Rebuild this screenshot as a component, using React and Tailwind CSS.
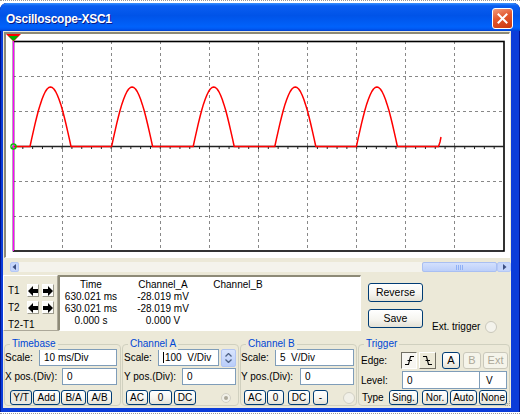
import React from "react";

const BASE = 146.5;

// red trace: half-wave rectified sine
function tracePath() {
  let d = `M13 ${BASE}`;
  for (let k = 0; k < 5; k++) {
    const s = 30 + 81.6 * k;
    d += ` L${s.toFixed(1)} ${BASE}`;
    for (let i = 1; i <= 24; i++) {
      const x = s + (41 * i) / 24;
      const y = BASE - 59.5 * Math.sin((Math.PI * i) / 24);
      d += ` L${x.toFixed(1)} ${y.toFixed(1)}`;
    }
  }
  d += ` L438.5 ${BASE} L440 142 L441 137`;
  return d;
}

const vLines = [62, 111, 160, 209, 258, 307, 356, 405, 454];
const hLines = [76, 111, 181, 216];
const ticks = Array.from({ length: 50 }, (_, i) => 13 + 9.82 * i);

function Plot() {
  return (
    <div className="ml-[1px] mr-[1px] mt-[1px] h-[226px] border-l-2 border-t-2 border-[#8d8a77] border-b border-r border-b-white border-r-white bg-white">
      <svg width="503" height="223" viewBox="6 34 503 223" className="block">
        {vLines.map((x) => (
          <line key={x} x1={x + 0.5} y1="41" x2={x + 0.5} y2="251" stroke="#888" strokeDasharray="3 3" />
        ))}
        {hLines.map((y) => (
          <line key={y} x1="13" y1={y + 0.5} x2="504" y2={y + 0.5} stroke="#888" strokeDasharray="3 3" />
        ))}
        <rect x="13.5" y="41.5" width="490.5" height="209.5" fill="none" stroke="#000" strokeWidth="1.6" />
        <line x1="13" y1={BASE} x2="504" y2={BASE} stroke="#222" strokeWidth="1.3" />
        {ticks.map((x) => (
          <line key={x} x1={x} y1={BASE} x2={x} y2={BASE + 2.5} stroke="#222" strokeWidth="1" />
        ))}
        <path d={tracePath()} fill="none" stroke="#ff0000" strokeWidth="1.5" strokeLinejoin="round" />
        <line x1="13.5" y1="36" x2="13.5" y2="251" stroke="#ff00ff" strokeWidth="1.2" />
        <polygon points="6,34 21,34 13.5,41.5" fill="#ff0000" />
        <polygon points="8.5,36 18.5,36 13.5,41" fill="#00b000" />
        <circle cx="13.5" cy={BASE} r="2.6" fill="none" stroke="#00c000" strokeWidth="1.3" />
      </svg>
    </div>
  );
}

function ScrollBar() {
  return (
    <div className="ml-[7px] mt-[4px] flex h-[10px]">
      <div className="flex w-[9px] items-center justify-center rounded-[2px] border border-[#b4c8f6] bg-[#c6d6fb]">
        <svg width="5" height="6" viewBox="0 0 5 6">
          <polygon points="4,0 4,6 0.5,3" fill="#3c4f82" />
        </svg>
      </div>
      <div className="flex-1 bg-[#f4f3ec]" />
      <div className="flex w-[75px] items-center justify-center gap-[1px] rounded-[2px] border border-[#a9bff2] bg-[linear-gradient(180deg,#d3e0fd,#bccffa)]">
        <span className="h-[5px] w-[1px] bg-[#8fb0f4]" />
        <span className="h-[5px] w-[1px] bg-[#8fb0f4]" />
        <span className="h-[5px] w-[1px] bg-[#8fb0f4]" />
        <span className="h-[5px] w-[1px] bg-[#8fb0f4]" />
      </div>
      <div className="flex w-[14px] items-center justify-center rounded-[2px] border border-[#b4c8f6] bg-[#c6d6fb]">
        <svg width="5" height="6" viewBox="0 0 5 6">
          <polygon points="1,0 1,6 4.5,3" fill="#3c4f82" />
        </svg>
      </div>
    </div>
  );
}

function Arrow({ dir }) {
  return (
    <div className="flex h-[13px] w-[12px] items-center justify-center border border-b-[#9c9a8c] border-l-white border-r-[#9c9a8c] border-t-white bg-[#fbfbf8]">
      <svg width="10" height="10" viewBox="0 0 10 10">
        {dir === "l" ? (
          <path d="M0 5 L5 0 L5 3 L10 3 L10 7 L5 7 L5 10 Z" fill="#000" />
        ) : (
          <path d="M10 5 L5 0 L5 3 L0 3 L0 7 L5 7 L5 10 Z" fill="#000" />
        )}
      </svg>
    </div>
  );
}

function XpButton({ className = "", children }) {
  return (
    <div
      className={`flex items-center justify-center rounded-[3px] border border-[#003c74] bg-[linear-gradient(180deg,#ffffff_0%,#f6f5f0_55%,#e4e1d5_100%)] leading-none text-black ${className}`}
    >
      {children}
    </div>
  );
}

function Disabled({ className = "", children }) {
  return (
    <div
      className={`flex items-center justify-center rounded-[3px] border border-[#cac8bb] bg-[#f5f4ea] leading-none text-[#aca899] ${className}`}
    >
      {children}
    </div>
  );
}

function Field({ className = "", children }) {
  return (
    <div className={`flex h-full items-center whitespace-pre border border-[#7f9db9] bg-white pl-[4px] ${className}`}>
      {children}
    </div>
  );
}

function GroupBox({ title, className = "", children }) {
  return (
    <div className={`relative mt-[13px] h-[62px] rounded-[4px] border border-[#d0d0bf] ${className}`}>
      <span className="absolute -top-[7px] left-[5px] bg-[#ece9d8] px-[2px] leading-[12px] text-[#0046d5]">
        {title}
      </span>
      {children}
    </div>
  );
}

function Readout() {
  const rows = [
    ["Time", "Channel_A", "Channel_B"],
    ["630.021 ms", "-28.019 mV", ""],
    ["630.021 ms", "-28.019 mV", ""],
    ["0.000 s", "0.000 V", ""],
  ];
  return (
    <div className="w-[303px] border-l-2 border-t-2 border-[#8d8a77] border-b border-r border-b-white border-r-white bg-white pt-[2px]">
      {rows.map((r, i) => (
        <div key={i} className="grid grid-cols-[62px_82px_68px] leading-[12px]">
          <span className="text-center">{r[0]}</span>
          <span className="text-center">{r[1]}</span>
          <span className="text-center">{r[2]}</span>
        </div>
      ))}
    </div>
  );
}

export default function App() {
  return (
    <div className="h-[415px] w-[520px] overflow-hidden bg-white font-['Liberation_Sans',Arial,sans-serif] text-[10px] text-black">
      <div className="h-[3px] border-t border-dotted border-[#9a9a9a]" />
      <div className="flex h-[409px] flex-col overflow-hidden rounded-t-[7px] bg-[#0b3cd9] shadow-[inset_1px_0_0_#00138c,inset_-1px_0_0_#00138c]">
        {/* Title bar */}
        <div className="flex h-[28px] shrink-0 items-start bg-[linear-gradient(180deg,#3d95ff_0%,#0a5ef0_10%,#0053e8_45%,#0062fb_85%,#0058f2_93%,#0041cf_100%)]">
          <span className="ml-[6px] mt-[9px] text-[12px] font-bold leading-[14px] tracking-[-0.25px] text-white [text-shadow:1px_1px_0_#0a1883]">
            Oscilloscope-XSC1
          </span>
          <div className="ml-auto mr-[7px] mt-[5px] flex h-[21px] w-[21px] items-center justify-center rounded-[3px] border border-white bg-[linear-gradient(160deg,#f19b7c_0%,#e2552c_45%,#c8370f_100%)]">
            <svg width="11" height="11" viewBox="0 0 11 11">
              <path d="M1.5 1.5 L9.5 9.5 M9.5 1.5 L1.5 9.5" stroke="#fff" strokeWidth="2" strokeLinecap="square" />
            </svg>
          </div>
        </div>

        {/* Client area */}
        <div className="mb-[4px] ml-[3px] mr-[9px] flex flex-1 flex-col bg-[#ece9d8]">
          <Plot />
          <ScrollBar />

          {/* Cursor readout row */}
          <div className="mt-[3px] flex h-[56px]">
            <div className="relative w-[55px] border-l border-t border-b-[#aca899] border-l-white border-r border-r-[#aca899] border-t-white border-b pl-[4px]">
              <div className="mt-[7px] flex items-center">
                <span className="w-[19px]">T1</span>
                <Arrow dir="l" />
                <div className="w-[3px]" />
                <Arrow dir="r" />
              </div>
              <div className="mt-[2px] flex items-center">
                <span className="w-[19px]">T2</span>
                <Arrow dir="l" />
                <div className="w-[3px]" />
                <Arrow dir="r" />
              </div>
              <div className="mt-[4px] leading-[12px]">T2-T1</div>
            </div>
            <Readout />
            <div className="ml-[7px] flex w-[55px] flex-col">
              <XpButton className="mt-[8px] h-[19px] text-[10.5px]">Reverse</XpButton>
              <XpButton className="mt-[7px] h-[19px] text-[10.5px]">Save</XpButton>
            </div>
            <div className="ml-[9px] mt-[46px] flex items-center self-start">
              <span className="leading-[12px]">Ext. trigger</span>
              <span className="ml-[5px] h-[12px] w-[12px] rounded-full border border-[#cac8bb] bg-[#f4f3ec]" />
            </div>
          </div>

          {/* Control groups */}
          <div className="ml-[1px] flex gap-[1px]">
            <GroupBox title="Timebase" className="w-[117px]">
              <div className="mt-[4px] flex h-[17px] items-center">
                <span className="w-[34px]">Scale:</span>
                <Field className="w-[78px]">10 ms/Div</Field>
              </div>
              <div className="mt-[2px] flex h-[17px] items-center">
                <span className="w-[57px]">X pos.(Div):</span>
                <Field className="w-[55px]">0</Field>
              </div>
              <div className="mt-[5px] flex h-[15px] gap-[1px] pl-[5px]">
                <XpButton className="w-[22px] bg-none bg-[#e9e8e1]">Y/T</XpButton>
                <XpButton className="w-[27px]">Add</XpButton>
                <XpButton className="w-[25px]">B/A</XpButton>
                <XpButton className="w-[25px]">A/B</XpButton>
              </div>
            </GroupBox>

            <GroupBox title="Channel A" className="w-[117px]">
              <div className="mt-[4px] flex h-[17px] items-center pl-[1px]">
                <span className="w-[34px]">Scale:</span>
                <Field className="w-[61px]">
                  <span className="mr-[1px] h-[11px] w-[1px] bg-black" />
                  {"100  V/Div"}
                </Field>
                <div className="ml-[2px] flex h-[18px] w-[15px] flex-col items-center justify-center gap-[2px] rounded-[2px] border border-[#b1c5f3] bg-[linear-gradient(180deg,#d8e4fd,#b9cdf9)]">
                  <svg width="7" height="4" viewBox="0 0 7 4">
                    <path d="M0.5 3.5 L3.5 0.5 L6.5 3.5" fill="none" stroke="#4d6185" strokeWidth="1.3" />
                  </svg>
                  <svg width="7" height="4" viewBox="0 0 7 4">
                    <path d="M0.5 0.5 L3.5 3.5 L6.5 0.5" fill="none" stroke="#4d6185" strokeWidth="1.3" />
                  </svg>
                </div>
              </div>
              <div className="mt-[2px] flex h-[17px] items-center pl-[1px]">
                <span className="w-[58px]">Y pos.(Div):</span>
                <Field className="w-[54px]">0</Field>
              </div>
              <div className="mt-[5px] flex h-[15px] items-center pl-[3px]">
                <XpButton className="h-full w-[22px]">AC</XpButton>
                <XpButton className="ml-[1px] h-full w-[23px]">0</XpButton>
                <XpButton className="ml-[2px] h-full w-[22px]">DC</XpButton>
                <span className="ml-[25px] flex h-[10px] w-[10px] items-center justify-center rounded-full border border-[#d2d0c4] bg-[#f1f0e8]">
                  <span className="h-[4px] w-[4px] rounded-full bg-[#aca899]" />
                </span>
              </div>
            </GroupBox>

            <GroupBox title="Channel B" className="w-[117px]">
              <div className="mt-[4px] flex h-[17px] items-center">
                <span className="w-[34px]">Scale:</span>
                <Field className="w-[79px]">{"5  V/Div"}</Field>
              </div>
              <div className="mt-[2px] flex h-[17px] items-center">
                <span className="w-[59px]">Y pos.(Div):</span>
                <Field className="w-[54px]">0</Field>
              </div>
              <div className="mt-[5px] flex h-[15px] items-center pl-[3px]">
                <XpButton className="h-full w-[22px]">AC</XpButton>
                <XpButton className="ml-[1px] h-full w-[17px]">0</XpButton>
                <XpButton className="ml-[4px] h-full w-[22px]">DC</XpButton>
                <XpButton className="ml-[3px] h-full w-[15px]">-</XpButton>
                <span className="ml-[15px] h-[12px] w-[12px] rounded-full border border-[#d2d0c4] bg-[#f1f0e8]" />
              </div>
            </GroupBox>

            <GroupBox title="Trigger" className="w-[152px]">
              <div className="mt-[6px] flex h-[18px] items-center pl-[2px]">
                <span className="w-[40px]">Edge:</span>
                <div className="flex h-[17px] w-[16px] items-center justify-center border border-b-white border-l-[#716f64] border-r-white border-t-[#716f64] bg-[#f7f6f1]">
                  <svg width="11" height="11" viewBox="0 0 11 11">
                    <path d="M1 9.5 H4.5 L6.5 1.5 H10 M3.5 5.5 H8" fill="none" stroke="#000" strokeWidth="1.1" />
                  </svg>
                </div>
                <div className="ml-[2px] flex h-[17px] w-[17px] items-center justify-center border border-b-[#716f64] border-l-white border-r-[#716f64] border-t-white bg-[#ece9d8]">
                  <svg width="11" height="11" viewBox="0 0 11 11">
                    <path d="M1 1.5 H4.5 L6.5 9.5 H10 M3.5 5.5 H8" fill="none" stroke="#000" strokeWidth="1.1" />
                  </svg>
                </div>
                <XpButton className="ml-[6px] h-[17px] w-[18px] text-[11px]">A</XpButton>
                <Disabled className="ml-[3px] h-[17px] w-[18px] text-[11px]">B</Disabled>
                <Disabled className="ml-[2px] h-[17px] w-[25px] text-[11px]">Ext</Disabled>
              </div>
              <div className="mt-[2px] flex h-[18px] items-center pl-[2px]">
                <span className="w-[41px]">Level:</span>
                <Field className="w-[78px]">0</Field>
                <div className="flex h-full w-[27px] items-center border border-l-0 border-[#7f9db9] bg-white pl-[6px]">V</div>
              </div>
              <div className="mt-[1px] flex h-[15px] items-center pl-[3px]">
                <span className="w-[27px]">Type</span>
                <XpButton className="h-full w-[29px]">Sing.</XpButton>
                <XpButton className="ml-[4px] h-full w-[26px]">Nor.</XpButton>
                <XpButton className="ml-[2px] h-full w-[27px]">Auto</XpButton>
                <XpButton className="ml-[2px] h-full w-[28px]">None</XpButton>
              </div>
              <svg width="7" height="7" viewBox="0 0 7 7" className="absolute -bottom-[2px] -right-[2px]">
                <rect x="5" y="1" width="1" height="1" fill="#aca899" />
                <rect x="3" y="3" width="1" height="1" fill="#aca899" />
                <rect x="5" y="3" width="1" height="1" fill="#aca899" />
                <rect x="1" y="5" width="1" height="1" fill="#aca899" />
                <rect x="3" y="5" width="1" height="1" fill="#aca899" />
                <rect x="5" y="5" width="1" height="1" fill="#aca899" />
              </svg>
            </GroupBox>
          </div>
        </div>
      </div>
      <div className="mt-[1px] border-t border-dotted border-[#9a9a9a]" />
    </div>
  );
}
